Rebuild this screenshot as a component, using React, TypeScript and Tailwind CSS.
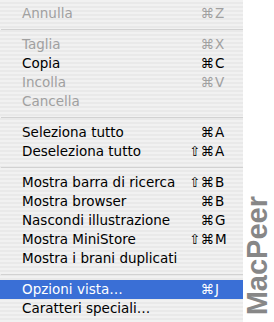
type Item = {
  label: string;
  mod?: string;
  key?: string;
  disabled?: boolean;
  active?: boolean;
};

type Entry = Item | 'sep';

const entries: Entry[] = [
  { label: 'Annulla', mod: '⌘', key: 'Z', disabled: true },
  'sep',
  { label: 'Taglia', mod: '⌘', key: 'X', disabled: true },
  { label: 'Copia', mod: '⌘', key: 'C' },
  { label: 'Incolla', mod: '⌘', key: 'V', disabled: true },
  { label: 'Cancella', disabled: true },
  'sep',
  { label: 'Seleziona tutto', mod: '⌘', key: 'A' },
  { label: 'Deseleziona tutto', mod: '⇧⌘', key: 'A' },
  'sep',
  { label: 'Mostra barra di ricerca', mod: '⇧⌘', key: 'B' },
  { label: 'Mostra browser', mod: '⌘', key: 'B' },
  { label: 'Nascondi illustrazione', mod: '⌘', key: 'G' },
  { label: 'Mostra MiniStore', mod: '⇧⌘', key: 'M' },
  { label: 'Mostra i brani duplicati' },
  'sep',
  { label: 'Opzioni vista…', mod: '⌘', key: 'J', active: true },
  { label: 'Caratteri speciali…' },
];

const MenuRow = ({ item }: { item: Item }) => {
  const color = item.active
    ? 'bg-[#3a6fd6] text-white'
    : item.disabled
      ? 'text-[#a0a0a0]'
      : 'text-black';
  return (
    <div className={`flex items-center h-[19px] pl-[22px] pr-[14px] ${color}`}>
      <span className="flex-1 whitespace-nowrap">{item.label}</span>
      <span className="w-[30px] text-right">{item.mod}</span>
      <span className="w-[15px] pl-[1px]">{item.key}</span>
    </div>
  );
};

const App = () => {
  return (
    <div className="flex w-[274px] h-[322px] bg-white overflow-hidden">
      {/* Menu */}
      <div className="w-[245px] h-full pt-[4px] bg-[repeating-linear-gradient(to_bottom,#f1f1f1_0px,#f1f1f1_2px,#e9e9e9_2px,#e9e9e9_4px)] font-['DejaVu_Sans',sans-serif] text-[13.5px] leading-none">
        {entries.map((e, i) =>
          e === 'sep' ? (
            <div key={i} className="h-[12px] flex items-center pl-[1px]">
              <div className="w-full h-px bg-[#d2d2d2]" />
            </div>
          ) : (
            <MenuRow key={i} item={e} />
          )
        )}
      </div>

      {/* Watermark */}
      <div className="flex-1 flex items-end justify-center pb-[7px] pr-[2px]">
        <span className="[writing-mode:vertical-rl] rotate-180 font-['Liberation_Sans',sans-serif] font-bold text-[29px] leading-none text-[#878787]">
          MacPeer
        </span>
      </div>
    </div>
  );
};

export default App;
